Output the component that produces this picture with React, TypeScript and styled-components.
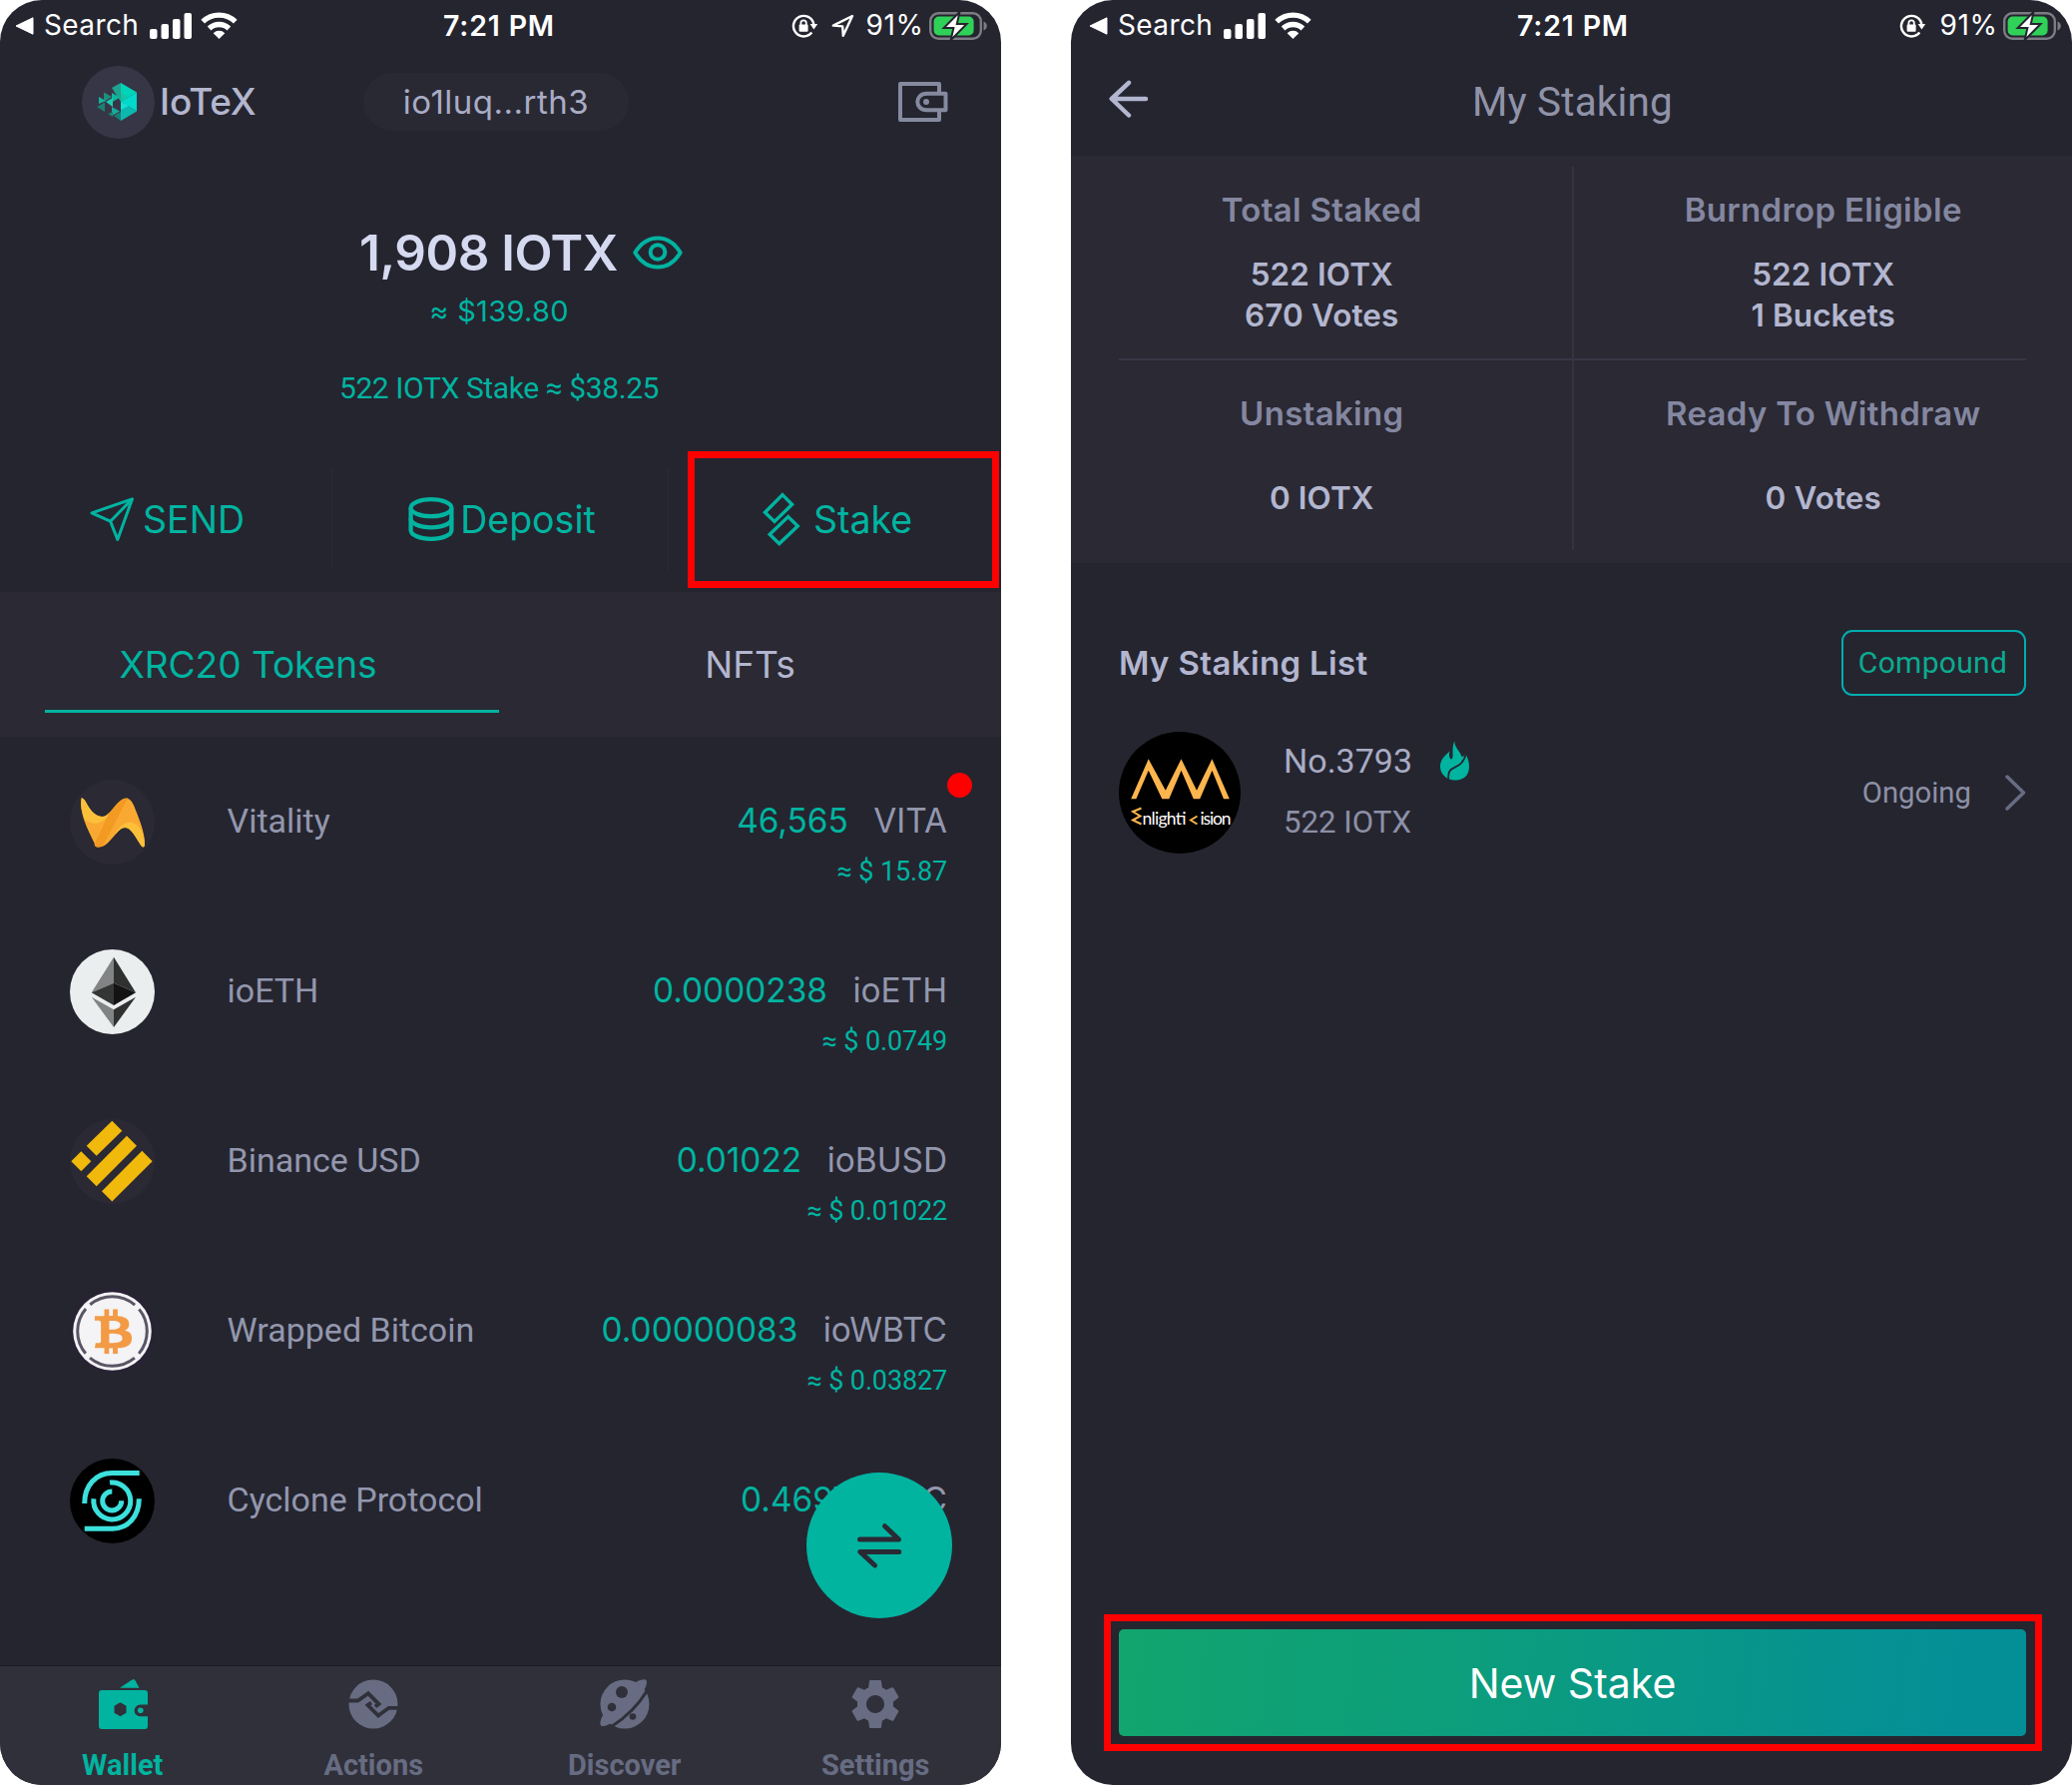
import React from 'react';
import styled, { createGlobalStyle, css } from 'styled-components';
import { FaBtc } from 'react-icons/fa';
import { MdSettings } from 'react-icons/md';

const color = {
  screen: '#252530',
  panel: '#2a2934',
  bar: '#30303a',
  line: '#373645',
  accent: '#00b4a0',
  bright: '#d5daf0',
  text: '#b3b6cf',
  soft: '#9397ad',
  muted: '#8487a0',
  idle: '#676c82',
  marker: '#ff0000',
};

const sf = css`font-family: Inter, 'Noto Sans', sans-serif;`;
const roboto = css`font-family: Roboto, 'Noto Sans', sans-serif;`;

const GlobalStyle = createGlobalStyle`
  *, *::before, *::after { box-sizing: border-box; }
  body { margin: 0; background: #fff; }
  svg { display: block; flex: none; }
`;

const Page = styled.main`
  display: flex;
  justify-content: space-between;
  width: 2076px;
  height: 1788px;
  ${sf}
  white-space: nowrap;
`;

const Phone = styled.section`
  width: 1003px;
  height: 1788px;
  border-radius: 42px;
  overflow: hidden;
  background: ${color.screen};
`;

const Screen = styled.div<{ $shift?: number }>`
  display: flex;
  flex-direction: column;
  width: 1006px;
  height: 1788px;
  margin-left: ${(p) => p.$shift ?? 0}px;
`;

/* ---------- status bar ---------- */

const StatusRow = styled.div`
  display: grid;
  grid-template-columns: 1fr auto 1fr;
  align-items: center;
  height: 51px;
  padding: 0 14px 0 18px;
  color: #fff;
  font-size: 28px;
  line-height: 51px;
`;
const StatusSide = styled.div<{ $end?: boolean }>`
  display: flex;
  align-items: center;
  justify-content: ${(p) => (p.$end ? 'flex-end' : 'flex-start')};
`;
const BackLabel = styled.span`
  width: 96px;
  margin: 0 10px 0 9px;
  letter-spacing: 0.4px;
`;
const Clock = styled.span`
  margin-left: -4px;
  font-size: 28.500px;
  font-weight: 600;
  letter-spacing: 0.8px;
`;
const Percent = styled.span<{ $gap: number }>`
  margin: 0 5.500px 0 ${(p) => p.$gap}px;
  letter-spacing: 0.6px;
`;
const SignalIcons = styled.span`
  display: flex;
  align-items: center;
  gap: 8px;
`;
const LockIcons = styled.span`
  display: flex;
  align-items: center;
  gap: 13px;
`;

function StatusBar({ location }: { location?: boolean }) {
  return (
    <StatusRow>
      <StatusSide>
        <svg width="20" height="18" viewBox="0 0 20 18"><path d="M1 9 18 .8v16.4z" fill="#fff" stroke="#fff" strokeLinejoin="round" /></svg>
        <BackLabel>Search</BackLabel>
        <SignalIcons>
          <svg width="43" height="26" viewBox="0 0 43 26" fill="#fff">
            <rect x="0" y="16" width="7.5" height="10" rx="2" />
            <rect x="11.5" y="11" width="7.5" height="15" rx="2" />
            <rect x="23" y="6" width="7.5" height="20" rx="2" />
            <rect x="34.5" y="0" width="7.5" height="26" rx="2" />
          </svg>
          <svg width="37" height="27" viewBox="0 0 37 27" fill="none" stroke="#fff" strokeWidth="5.300">
            <path d="M2.200 9.700a23.500 23.500 0 0 1 32.600 0" />
            <path d="M8.600 16.500a14.300 14.300 0 0 1 19.800 0" />
            <path d="M18.500 27 12.700 21.200a8.200 8.200 0 0 1 11.600 0z" fill="#fff" stroke="none" />
          </svg>
        </SignalIcons>
      </StatusSide>
      <Clock>7:21 PM</Clock>
      <StatusSide $end>
        <LockIcons>
          <svg width="27" height="24" viewBox="0 0 27 24" fill="none" stroke="#fff" strokeWidth="2.400">
            <path d="M20.300 18.600A10.300 10.300 0 1 1 22.300 10" />
            <path d="M18.600 10h7.600l-3.800 5.400z" fill="#fff" stroke="none" />
            <rect x="7.600" y="10.600" width="9" height="7.200" rx="1" fill="#fff" stroke="none" />
            <path d="M9.400 11V9a2.700 2.700 0 0 1 5.400 0v2" strokeWidth="1.800" />
          </svg>
          {location && (
            <svg width="23" height="24" viewBox="0 0 23 24" fill="none" stroke="#fff" strokeWidth="2.400" strokeLinejoin="round">
              <path d="M21 2 1.800 11.600l9.400.8.6 9.400z" />
            </svg>
          )}
        </LockIcons>
        <Percent $gap={location ? 11 : 13}>91%</Percent>
        <svg width="58" height="30" viewBox="0 0 58 30">
          <rect x="1.200" y="2.200" width="50.600" height="25.600" rx="8" fill="none" stroke="#7c7c84" strokeWidth="2.400" />
          <rect x="4.600" y="5.600" width="40" height="18.800" rx="5" fill="#30d158" />
          <path d="M54.500 10.500c4.400 1.200 4.400 7.800 0 9z" fill="#7c7c84" />
          <path d="M30.500 1 14.600 17h9.800L21.600 29.200 37.600 13h-9.800z" fill="#fff" stroke={color.screen} strokeWidth="2" />
        </svg>
      </StatusSide>
    </StatusRow>
  );
}

/* ---------- wallet: header ---------- */

const WalletHeader = styled.header`
  display: flex;
  align-items: center;
  height: 102px;
  padding: 0 53px 0 85px;
`;
const BrandBadge = styled.div`
  display: grid;
  place-items: center;
  width: 73px;
  height: 73px;
  padding-right: 3px;
  border-radius: 50%;
  background: #373646;
`;
const BrandName = styled.span`
  width: 209px;
  padding: 0 0 1px 5px;
  color: ${color.text};
  font-size: 37px;
  font-weight: 500;
  letter-spacing: -0.2px;
`;
const AddressPill = styled.div`
  width: 266px;
  height: 58px;
  margin-right: auto;
  border-radius: 29px;
  background: #292934;
  color: #a9acc5;
  font-size: 33px;
  letter-spacing: 0.5px;
  line-height: 58px;
  text-align: center;
`;

const IotexMark = () => (
  <svg width="40" height="38" viewBox="0 0 40 38">
    <path d="M24 0 40 9.500 24 19z" fill="#00d4b8" />
    <path d="M24 0v19L15 5z" fill="#1fa38f" />
    <path d="M40 9.500v19L24 19z" fill="#00d9cc" />
    <path d="M24 19 40 28.500 24 38z" fill="#0cb9b0" />
    <path d="M24 19v8l8-4z" fill="#14e0d4" />
    <path d="M24 10 32 14.400 24 19z" fill="#12c4a8" />
    <path d="M15 10l8 4.500-8 5z" fill="#12b79c" />
    <path d="M7 9.500 15 14l-8 5z" fill="#1d8f7d" />
    <path d="M2 14l7 4-7 3z" fill="#16b39b" />
    <path d="M9 19l7-4v9z" fill="#1ccbb4" />
    <path d="M0 24l8-4.500V29z" fill="#1a8073" />
    <path d="M15 24l8 4.500-8 4.500z" fill="#18aa9a" />
    <path d="M11 31l5-2v5z" fill="#1a8073" />
    <path d="M24 29v9l-7-5z" fill="#187f76" />
  </svg>
);

const WalletOutline = () => (
  <svg width="50" height="40" viewBox="0 0 50 40" fill="none" stroke="#858a9f" strokeWidth="4" strokeLinejoin="round">
    <path d="M41 10V2H2v36h39v-8" />
    <path d="M47.500 11.700H28.500c-12.300 0-12.300 16.600 0 16.600H47.500z" />
    <circle cx="28" cy="20" r="3" fill="#858a9f" stroke="none" />
  </svg>
);

/* ---------- wallet: balance ---------- */

const Balance = styled.div`
  display: flex;
  flex-direction: column;
  align-items: center;
  padding-top: 70px;
`;
const Total = styled.div`
  display: flex;
  align-items: center;
  gap: 15px;
  height: 60px;
  padding-left: 44px;
  color: ${color.bright};
  font-size: 49.500px;
  font-weight: 600;
  letter-spacing: -0.4px;
  line-height: 60px;
`;
const Fiat = styled.div`
  margin-top: 8.500px;
  color: ${color.accent};
  font-size: 29px;
  letter-spacing: 0.3px;
  line-height: 40px;
`;
const StakeFiat = styled.div`
  ${roboto}
  margin-top: 37px;
  color: ${color.accent};
  font-size: 30px;
  letter-spacing: -0.4px;
  line-height: 40px;
`;

const ActionRow = styled.nav`
  display: flex;
  height: 102px;
  margin: 60.500px 0 22px;
`;
const ActionItem = styled.button<{ $gap: number; $basis: number; $nudge?: number }>`
  ${sf}
  display: flex;
  align-items: center;
  justify-content: center;
  gap: ${(p) => p.$gap}px;
  width: ${(p) => p.$basis}px;
  padding: 0 0 0 ${(p) => p.$nudge ?? 0}px;
  border: 0;
  border-right: 1px solid #2b2b36;
  background: none;
  color: ${color.accent};
  font-size: 37.500px;
  &:last-child { border-right: 0; }
`;
const StakeSlot = styled.div`
  position: relative;
  display: flex;
`;
const StakeMarker = styled.div`
  position: absolute;
  inset: -17px 2px -18px 19px;
  border: 7.500px solid ${color.marker};
`;

const SendGlyph = () => (
  <svg width="45" height="45" viewBox="0 0 45 45" fill="none" stroke={color.accent} strokeWidth="3" strokeLinejoin="round">
    <path d="M42.500 1.800 2 15.800l18.600 8.400 7.200 18.200z" />
    <path d="M42.500 1.800 20.600 24.200" />
  </svg>
);
const DepositGlyph = () => (
  <svg width="46" height="44" viewBox="0 0 46 44" fill="none" stroke={color.accent} strokeWidth="4.300">
    <ellipse cx="23" cy="10.700" rx="20.400" ry="8.500" />
    <path d="M2.600 10.700V33c0 5 9 8.800 20.400 8.800S43.400 38 43.400 33V10.700" />
    <path d="M2.600 21.500c0 5 9 8.800 20.400 8.800s20.400-3.800 20.400-8.800" />
  </svg>
);
const StakeGlyph = () => (
  <svg width="38" height="54" viewBox="0 0 38 54" fill="none" stroke={color.accent} strokeWidth="3.400">
    <path d="M20 2.600 29.600 12.300 12 29.500 2.400 20.300z" />
    <path d="M25.700 24.600 35.300 34 16.800 51.600 7.200 42.200z" />
  </svg>
);

/* ---------- wallet: tabs ---------- */

const TabRow = styled.div`
  display: flex;
  height: 145px;
  background: ${color.panel};
`;
const Tab = styled.div<{ $active?: boolean }>`
  ${sf}
  display: flex;
  flex: 1;
  flex-direction: column;
  color: ${(p) => (p.$active ? color.accent : color.text)};
  font-size: 37.200px;
  letter-spacing: -0.1px;
  line-height: 145px;
  text-align: center;
`;
const TabText = styled.span`
  height: 118px;
`;
const TabUnderline = styled.i`
  align-self: flex-end;
  width: 455px;
  height: 3px;
  background: ${color.accent};
`;

/* ---------- wallet: tokens ---------- */

const TokenList = styled.div`
  position: relative;
  flex: 1;
  padding-top: 1px;
`;
const TokenRow = styled.div`
  position: relative;
  display: flex;
  height: 170px;
  padding: 42px 54px 0 72.500px;
`;
const TokenName = styled.span`
  ${roboto}
  flex: 1;
  padding-left: 73px;
  color: ${color.soft};
  font-size: 34px;
  line-height: 83px;
`;
const TokenValues = styled.div`
  display: flex;
  flex-direction: column;
  align-items: flex-end;
`;
const TokenAmount = styled.div`
  display: flex;
  gap: 25.500px;
  color: ${color.soft};
  font-size: 33.400px;
  line-height: 82px;
`;
const Amount = styled.span`
  color: ${color.accent};
`;
const TokenFiat = styled.div`
  ${roboto}
  color: ${color.accent};
  font-size: 27px;
  letter-spacing: -0.15px;
  line-height: 21px;
`;
const Unread = styled.i`
  position: absolute;
  top: 35px;
  right: 29px;
  width: 25px;
  height: 25px;
  border-radius: 50%;
  background: ${color.marker};
`;
const SwapButton = styled.button`
  position: absolute;
  top: 736.500px;
  right: 49px;
  display: grid;
  place-items: center;
  width: 146px;
  height: 146px;
  padding: 0;
  border: 0;
  border-radius: 50%;
  background: ${color.accent};
`;

const Coin = ({ children, fill }: { children: React.ReactNode; fill: string }) => (
  <svg width="85" height="85" viewBox="0 0 85 85">
    <circle cx="42.500" cy="42.500" r="42.500" fill={fill} />
    {children}
  </svg>
);

const VitaCoin = () => (
  <Coin fill={color.panel}>
    <path d="M11.500 18.500c1.500-.5 3 1 4 3 6 12 12 15.500 17 15.500 8 0 15-18.500 24-18.500 4 0 7 5 9 11 5 12 9.800 25 9.500 35 0 4-2.500 3.500-4 1-5-8-10-17.500-15.500-17.500-9 0-15 19.500-26.500 19.500-3 0-3.500-1.500-4.500-4C18 50 9 33 11.500 18.500z" fill="#f9a932" />
    <path d="M11.500 18.500c1.500-.5 3 1 4 3 6 12 12 15.500 17 15.500 3 0 5.500-2 8-4.500-4 9-15 16-26 7-2.500-7-4-14-3-21zM75 64.500c0 4-2.500 3.500-4 1-5-8-10-17.500-15.500-17.500-4 0-7 3.500-10.500 7.500 5-13 18-18 26-6 2.500 6 4.200 11 4 15z" fill="#fbc03a" />
    <path d="M58 18.600 33 66.500c-2 .8-3.500 1-5 1-1.500 0-3-.5-3.500-2.500L39 34c6-6 11-15.500 19-15.400z" fill="#f29a22" />
  </Coin>
);
const EthCoin = () => (
  <Coin fill="#ebeeef">
    <path d="M44 7.700V33.700L21.700 43.300z" fill="#828384" />
    <path d="M44 7.700V33.700L66 43.300z" fill="#2f3030" />
    <path d="M44 33.700V56L21.700 43.300z" fill="#343535" />
    <path d="M44 33.700V56L66 43.300z" fill="#131313" />
    <path d="M21.700 47.700 44 60.300V78z" fill="#828384" />
    <path d="M66 47.700 44 60.300V78z" fill="#2f3030" />
  </Coin>
);
const BusdCoin = () => (
  <Coin fill={color.panel}>
    <g fill="#f0b90b">
      <path d="M42.300 1.800 52.300 11.800 26.700 36.800 16.700 26.800z" />
      <path d="M11.300 32.200 21.300 42.200 11.300 52.200 1.300 42.200z" />
      <path d="M57 16.800 67 26.800 26.700 67.200 16.700 57.200z" />
      <path d="M72.300 31.800 82.700 42.200 42.300 82.500 32 72.200z" />
    </g>
  </Coin>
);
const WbtcCoin = () => (
  <Coin fill="#282234">
    <circle cx="42.500" cy="42.500" r="39.300" fill="#f4f3f5" />
    <circle cx="42.500" cy="42.500" r="34.800" fill="none" stroke="#5a5564" strokeWidth="3" strokeDasharray="48.670 6" strokeDashoffset="-30.300" />
    <svg x="24.500" y="20.300" width="38" height="45" viewBox="0 0 384 512" preserveAspectRatio="none" color="#f39a45">
      <FaBtc width={384} height={512} size={undefined} style={{ width: 384, height: 512 }} />
    </svg>
  </Coin>
);
const CycloneCoin = () => (
  <Coin fill="#000">
    <g fill="none" stroke="#3ce0dc" strokeWidth="5">
      <path d="M14.700 45C14.700 27 26 14.600 42.300 14.600H69.700" />
      <path d="M69.300 40.300C69.300 58 58 70.300 43 70.300H14.700" />
      <path d="M40 24.100A18.500 18.500 0 1 1 23.900 40.300" />
      <path d="M42.300 33A9.500 9.500 0 1 0 51.700 42.300" />
    </g>
  </Coin>
);

const tokens = [
  { name: 'Vitality', amount: '46,565', symbol: 'VITA', fiat: '≈ $ 15.87', Icon: VitaCoin, unread: true },
  { name: 'ioETH', amount: '0.0000238', symbol: 'ioETH', fiat: '≈ $ 0.0749', Icon: EthCoin },
  { name: 'Binance USD', amount: '0.01022', symbol: 'ioBUSD', fiat: '≈ $ 0.01022', Icon: BusdCoin },
  { name: 'Wrapped Bitcoin', amount: '0.00000083', symbol: 'ioWBTC', fiat: '≈ $ 0.03827', Icon: WbtcCoin },
  { name: 'Cyclone Protocol', amount: '0.4697', symbol: 'CYC', fiat: '', Icon: CycloneCoin },
];

/* ---------- wallet: bottom navigation ---------- */

const BottomNav = styled.nav`
  display: flex;
  height: 120px;
  border-top: 1.500px solid #1d1c27;
  background: ${color.bar};
`;
const NavItem = styled.div<{ $active?: boolean }>`
  ${roboto}
  display: flex;
  flex: 1;
  flex-direction: column;
  align-items: center;
  color: ${(p) => (p.$active ? color.accent : color.idle)};
  font-size: 29px;
  font-weight: 700;
  line-height: 36px;
`;
const NavIcon = styled.span`
  display: grid;
  place-items: center;
  height: 74px;
  padding: 2px 0 0;
  margin-bottom: 7px;
`;

const NavWallet = () => (
  <svg width="50" height="50" viewBox="-1 0 50 50" fill="currentColor">
    <path d="M21 8.700 33 .8c1.500-1 3-.8 3.600.8L40.500 8.700z" />
    <path fillRule="evenodd" d="M3 11h43c2 0 3 1 3 3v11.500h-7.500a5.900 5.900 0 0 0 0 11.800H49V47c0 2-1 3-3 3H3c-2 0-3-1-3-3V14c0-2 1-3 3-3zm18.500 12.300L15.500 26.800v7l6 3.500 6-3.500v-7z" />
    <circle cx="41.800" cy="31.200" r="2.800" />
  </svg>
);
const NavActions = () => (
  <svg width="50" height="50" viewBox="0 0 50 50">
    <circle cx="25" cy="25" r="24.500" fill="currentColor" />
    <g fill="none" stroke={color.bar} strokeWidth="3.800">
      <path d="M0 21.500H9.500L20 14.300 30.500 24.800 27 27.500" />
      <path d="M50 28.800H40.500L30 36.500 19.500 26 23 23.500" />
    </g>
  </svg>
);
const NavDiscover = () => (
  <svg width="50" height="50" viewBox="0 0 50 50">
    <circle cx="25" cy="25" r="24.500" fill="currentColor" />
    <path d="M36 3c6-3 11-4 11 0 0 3-2 7-4 10zM3 36c-3 6-4 11 0 11 3 0 7-2 10-4z" fill="currentColor" />
    <path d="M47 12C38 27 25 39 11 48" fill="none" stroke={color.bar} strokeWidth="3" />
    <g fill={color.bar}>
      <circle cx="22" cy="13" r="6" />
      <circle cx="12" cy="28" r="4.300" />
      <circle cx="33" cy="37.500" r="3.300" />
    </g>
  </svg>
);
const NavSettings = () => <MdSettings size={60} />;

const navItems = [
  { label: 'Wallet', Icon: NavWallet, active: true },
  { label: 'Actions', Icon: NavActions },
  { label: 'Discover', Icon: NavDiscover },
  { label: 'Settings', Icon: NavSettings },
];

function WalletScreen() {
  return (
    <Screen $shift={-3}>
      <StatusBar location />
      <WalletHeader>
        <BrandBadge><IotexMark /></BrandBadge>
        <BrandName>IoTeX</BrandName>
        <AddressPill>io1luq...rth3</AddressPill>
        <WalletOutline />
      </WalletHeader>
      <Balance>
        <Total>
          1,908 IOTX
          <svg width="50" height="34" viewBox="0 0 50 34" fill="none" stroke={color.accent} strokeWidth="4">
            <path d="M2.300 17C8 7.500 16 2.400 25 2.400S42 7.500 47.700 17C42 26.500 34 31.600 25 31.600S8 26.500 2.300 17z" strokeLinejoin="round" />
            <circle cx="25" cy="16.500" r="7.300" />
          </svg>
        </Total>
        <Fiat>≈ $139.80</Fiat>
        <StakeFiat>522 IOTX Stake ≈ $38.25</StakeFiat>
      </Balance>
      <ActionRow>
        <ActionItem $gap={8} $basis={336} $nudge={6}><SendGlyph />SEND</ActionItem>
        <ActionItem $gap={6} $basis={337} $nudge={4}><DepositGlyph />Deposit</ActionItem>
        <StakeSlot>
          <ActionItem $gap={13} $basis={333} $nudge={6}><StakeGlyph />Stake</ActionItem>
          <StakeMarker />
        </StakeSlot>
      </ActionRow>
      <TabRow>
        <Tab $active><TabText>XRC20 Tokens</TabText><TabUnderline /></Tab>
        <Tab><TabText>NFTs</TabText></Tab>
      </TabRow>
      <TokenList>
        {tokens.map(({ name, amount, symbol, fiat, Icon, unread }) => (
          <TokenRow key={name}>
            <Icon />
            <TokenName>{name}</TokenName>
            <TokenValues>
              <TokenAmount><Amount>{amount}</Amount>{symbol}</TokenAmount>
              {fiat && <TokenFiat>{fiat}</TokenFiat>}
            </TokenValues>
            {unread && <Unread />}
          </TokenRow>
        ))}
        <SwapButton aria-label="Swap">
          <svg width="46" height="46" viewBox="0 0 46 46" fill="none" stroke="#2a2934" strokeWidth="5" strokeLinecap="round" strokeLinejoin="round">
            <path d="M3.500 17H42.500L28.500 3.700" />
            <path d="M42.700 29.500H3.800L18.500 43" />
          </svg>
        </SwapButton>
      </TokenList>
      <BottomNav>
        {navItems.map(({ label, Icon, active }) => (
          <NavItem key={label} $active={active}>
            <NavIcon><Icon /></NavIcon>
            {label}
          </NavItem>
        ))}
      </BottomNav>
    </Screen>
  );
}

/* ---------- staking ---------- */

const StakingHeader = styled.header`
  display: grid;
  grid-template-columns: 40px 1fr 40px;
  align-items: center;
  height: 105px;
  padding: 0 39px 8px 38px;
`;
const StakingTitle = styled.h1`
  ${roboto}
  margin: 0;
  padding-top: 5px;
  color: #9093a8;
  font-size: 40.500px;
  font-weight: 400;
  letter-spacing: 0.15px;
  line-height: 92px;
  text-align: center;
`;
const StatsPanel = styled.div`
  position: relative;
  display: grid;
  grid-template-columns: 1fr 1fr;
  grid-template-rows: 204px 204px;
  height: 408px;
  padding-right: 1px;
  background: ${color.panel};
`;
const Stat = styled.div`
  display: flex;
  flex-direction: column;
  align-items: center;
`;
const StatTitle = styled.div`
  margin-top: 34px;
  color: ${color.muted};
  font-size: 33px;
  font-weight: 600;
  letter-spacing: 0.3px;
  line-height: 40px;
`;
const StatValues = styled.div<{ $single?: boolean }>`
  margin-top: ${(p) => (p.$single ? 44 : 24)}px;
  color: ${color.text};
  font-size: 31.500px;
  font-weight: 600;
  letter-spacing: 0.1px;
  line-height: 41px;
  text-align: center;
`;
const VerticalRule = styled.i`
  position: absolute;
  top: 11px;
  bottom: 13px;
  left: 502px;
  width: 2px;
  background: #343440;
`;
const HorizontalRule = styled.i`
  position: absolute;
  top: 203px;
  left: 48px;
  right: 49px;
  height: 2px;
  background: ${color.line};
`;

const ListHead = styled.div`
  display: flex;
  align-items: center;
  justify-content: space-between;
  height: 66px;
  margin: 67px 49px 0 48px;
`;
const ListTitle = styled.h2`
  margin: 0;
  color: ${color.text};
  font-size: 33px;
  font-weight: 600;
  letter-spacing: 0.35px;
`;
const CompoundButton = styled.button`
  ${roboto}
  width: 185px;
  height: 66px;
  padding: 0 2px 1px 0;
  border: 2.500px solid #00adb0;
  border-radius: 11px;
  background: none;
  color: #0bab90;
  font-size: 30px;
  letter-spacing: 0.3px;
`;
const BucketRow = styled.div`
  display: flex;
  align-items: center;
  height: 122px;
  margin: 36px 49px 0 48px;
`;
const BucketInfo = styled.div`
  flex: 1;
  padding-left: 43px;
`;
const BucketName = styled.div`
  ${roboto}
  display: flex;
  align-items: center;
  gap: 28px;
  height: 59px;
  padding-bottom: 2px;
  color: #a9acc4;
  font-size: 34px;
`;
const BucketAmount = styled.div`
  ${roboto}
  height: 63px;
  color: #8d90a5;
  font-size: 31.200px;
  line-height: 63px;
`;
const BucketStatus = styled.span`
  ${roboto}
  margin-right: 33px;
  color: #8d90a5;
  font-size: 29.300px;
`;
const ButtonFrame = styled.div`
  display: flex;
  width: 940px;
  height: 137px;
  margin: auto 0 34px 33px;
  padding: 8px 9px 8px 8px;
  border: 7.500px solid ${color.marker};
`;
const NewStakeButton = styled.button`
  ${sf}
  flex: 1;
  padding: 0;
  border: 0;
  border-radius: 5px;
  background: linear-gradient(97deg, #12a56e 0%, #0c9d7d 40%, #048f97 92%);
  color: #fff;
  font-size: 41px;
`;

const Flame = () => (
  <svg width="30" height="40" viewBox="0 0 30 40">
    <path d="M14.500 0C13.500 6 20.500 11 21.500 16c1.500-.5 3-.8 4-2.500 3.500 6 4 12 3 16.500C27 36.500 21.500 39.600 14.500 39.600S0 34 0 26C0 18 6 14 9.500 10.500 8.500 14 9 17.500 11 18.500 14.500 17.500 10.500 8 14.500 0z" fill={color.accent} />
    <path d="M8.300 38.500C7 28 13 28 18.500 24.500c4.500-3 6-6 7-10.500" fill="none" stroke={color.screen} strokeWidth="1.800" />
  </svg>
);

const WordMark = styled.text`
  font-family: Lato, 'Open Sans', sans-serif;
  font-size: 17.500px;
  fill: #fff;
`;

const DelegateAvatar = () => (
  <svg width="122" height="122" viewBox="0 0 122 122">
    <circle cx="61" cy="61" r="61" fill="#000" />
    <path d="M12.200 67.300 29.700 27.300 46.800 58.700 62.500 27.300 78 58.700 93.400 27.300 110.800 67.300H105L93.400 38.700 81.200 67.300H74.800L62.500 38.700 50.300 67.300H43.300L29.700 38.700 17.400 67.300z" fill="#fdb54e" />
    <path d="M22.500 76.500 14 80 21.500 84.500 14 88.500 22.500 92.500M78.500 84.500 72 88.500 78.500 92.500" fill="none" stroke="#fdb54e" strokeWidth="2" />
    <WordMark x="23.500" y="93" textLength="44">nlighti</WordMark>
    <WordMark x="81.500" y="93" textLength="31">ision</WordMark>
  </svg>
);

function StakingScreen() {
  return (
    <Screen>
      <StatusBar />
      <StakingHeader>
        <svg width="40" height="40" viewBox="0 0 40 40" fill="none" stroke={color.text} strokeWidth="4.500" strokeLinecap="round" strokeLinejoin="round">
          <path d="M20 2.800 2.800 19 20 35.500M2.800 19H37" />
        </svg>
        <StakingTitle>My Staking</StakingTitle>
      </StakingHeader>
      <StatsPanel>
        <Stat>
          <StatTitle>Total Staked</StatTitle>
          <StatValues>522 IOTX<br />670 Votes</StatValues>
        </Stat>
        <Stat>
          <StatTitle>Burndrop Eligible</StatTitle>
          <StatValues>522 IOTX<br />1 Buckets</StatValues>
        </Stat>
        <Stat>
          <StatTitle>Unstaking</StatTitle>
          <StatValues $single>0 IOTX</StatValues>
        </Stat>
        <Stat>
          <StatTitle>Ready To Withdraw</StatTitle>
          <StatValues $single>0 Votes</StatValues>
        </Stat>
        <VerticalRule />
        <HorizontalRule />
      </StatsPanel>
      <ListHead>
        <ListTitle>My Staking List</ListTitle>
        <CompoundButton>Compound</CompoundButton>
      </ListHead>
      <BucketRow>
        <DelegateAvatar />
        <BucketInfo>
          <BucketName>No.3793<Flame /></BucketName>
          <BucketAmount>522 IOTX</BucketAmount>
        </BucketInfo>
        <BucketStatus>Ongoing</BucketStatus>
        <svg width="22" height="36" viewBox="0 0 22 36" fill="none" stroke="#676c82" strokeWidth="3.500" strokeLinecap="round" strokeLinejoin="round">
          <path d="M3 2 19.500 18 3 34" />
        </svg>
      </BucketRow>
      <ButtonFrame>
        <NewStakeButton>New Stake</NewStakeButton>
      </ButtonFrame>
    </Screen>
  );
}

export default function App() {
  return (
    <>
      <GlobalStyle />
      <Page>
        <Phone><WalletScreen /></Phone>
        <Phone><StakingScreen /></Phone>
      </Page>
    </>
  );
}
